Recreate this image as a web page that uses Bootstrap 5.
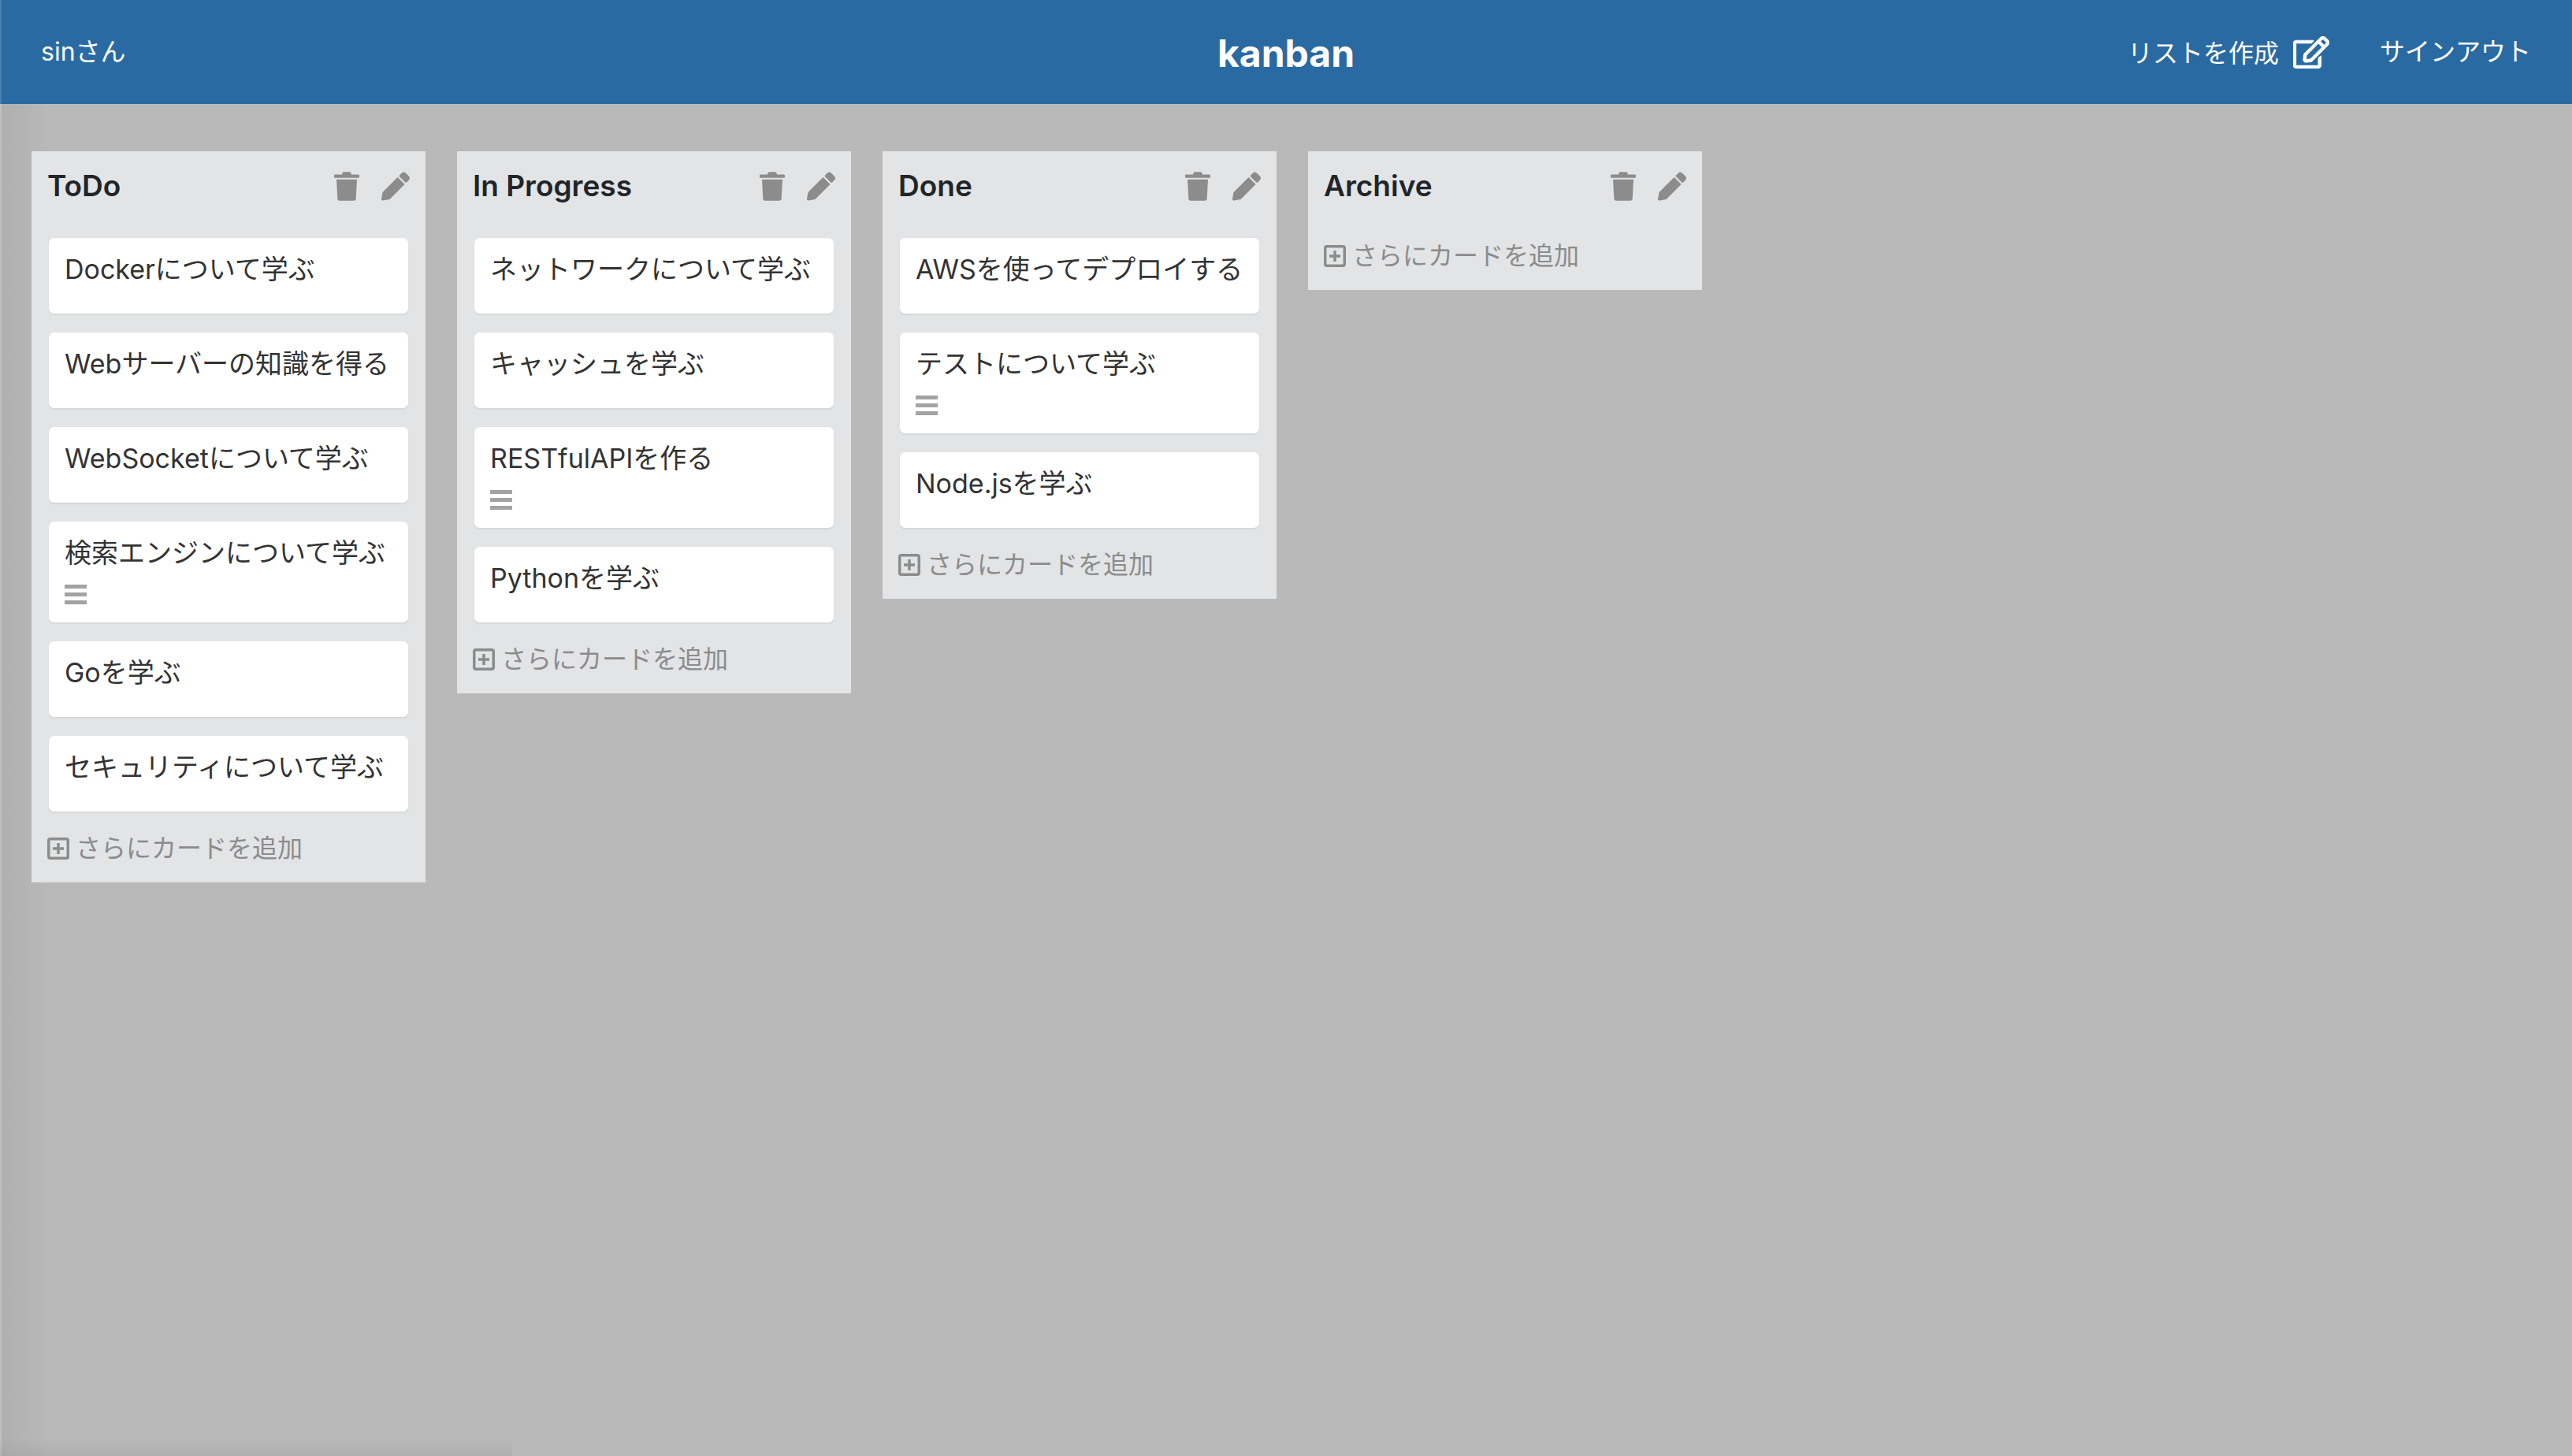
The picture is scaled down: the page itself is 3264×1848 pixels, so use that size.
<!DOCTYPE html>
<html lang="ja">
<head>
    <meta charset="UTF-8">
    <meta name="viewport" content="width=device-width, initial-scale=1.0">
    <title>kanban</title>
    <link href="https://cdn.jsdelivr.net/npm/bootstrap@5.3.0/dist/css/bootstrap.min.css" rel="stylesheet">
    <style>
        body {
            font-family: Inter, "Noto Sans CJK JP", sans-serif;
            background-color: #b9b9b9;
            background-image:
                linear-gradient(to top, rgba(0, 0, 0, 0.05), transparent 24px),
                linear-gradient(to right, rgba(255, 255, 255, 0.1) 2px, rgba(0, 0, 0, 0.05) 2px, transparent 64px);
            background-size: 650px 100%, 100% 100%;
            background-repeat: no-repeat;
            min-height: 1848px;
            color: #212529;
        }

        .kb-header {
            height: 132px;
            background-color: #2a6aa2;
            box-shadow: inset 2px 0 0 rgba(255, 255, 255, 0.15);
            padding: 0 52px;
            color: #fff;
            font-size: 32px;
        }

        .kb-header-side {
            flex: 1 1 0;
        }

        .kb-logo {
            font-size: 48px;
            font-weight: 700;
            padding-top: 3px;
        }

        .kb-create-label {
            padding-top: 3px;
        }

        .kb-create-icon {
            margin-left: 18px;
            margin-right: 64px;
            fill: #fff;
            stroke: #fff;
            stroke-width: 8;
        }

        .kb-board {
            padding: 60px 40px;
            gap: 40px;
        }

        .kb-list {
            width: 500px;
            background-color: #e2e4e6;
            padding: 20px;
        }

        .kb-list-head {
            margin-bottom: 42px;
        }

        .kb-list-title {
            font-size: 37px;
            font-weight: 600;
            line-height: 48px;
            margin: 0;
        }

        .kb-tools {
            gap: 28px;
        }

        .kb-tool {
            fill: #8c8c8c;
        }

        .kb-task {
            background-color: #fff;
            border-radius: 7px;
            min-height: 96px;
            margin: 0 2px 24px;
            padding: 19px 8px 23px 20px;
            font-size: 34px;
            line-height: 42px;
            box-shadow: 0 2px 2px rgba(0, 0, 0, 0.06);
            color: #333;
        }

        .kb-note {
            margin-top: 19px;
            fill: #a3a3a3;
        }

        .kb-add {
            font-size: 32px;
            color: #8c8c8c;
            height: 46px;
        }

        .kb-add-icon {
            fill: none;
            stroke: #8c8c8c;
            stroke-width: 3.5;
        }
    </style>
</head>
<body>
    <svg class="d-none">
        <symbol id="ic-trash" viewBox="0 0 448 512"><path d="M140 46l10-30q5-16 20-16h108q15 0 20 16l10 30h124q16 0 16 16v28q0 16-16 16H16q-16 0-16-16V62q0-16 16-16zM42 134h364l-18 340q-2 38-40 38H100q-38 0-40-38z"/></symbol>
        <symbol id="ic-pencil" viewBox="0 0 512 512"><path d="M497.9 142.1l-46.1 46.1c-4.7 4.7-12.3 4.7-17 0l-111-111c-4.7-4.7-4.7-12.3 0-17l46.1-46.1c18.7-18.7 49.1-18.7 67.9 0l60.1 60.1c18.8 18.7 18.8 49.1 0 67.9zM284.2 99.8L21.6 362.4.4 483.9c-2.9 16.4 11.4 30.6 27.8 27.8l121.5-21.3 262.6-262.6c4.7-4.7 4.7-12.3 0-17l-111-111c-4.8-4.7-12.4-4.7-17.1 0z"/></symbol>
    </svg>

    <header class="kb-header d-flex align-items-center">
        <div class="kb-header-side">sinさん</div>
        <div class="kb-logo">kanban</div>
        <div class="kb-header-side d-flex justify-content-end align-items-center">
            <span class="kb-create-label">リストを作成</span>
            <svg class="kb-create-icon" width="46" height="41" viewBox="0 0 576 512"><path d="M402.3 344.9l32-32c5-5 13.7-1.5 13.7 5.7V464c0 26.5-21.5 48-48 48H48c-26.5 0-48-21.5-48-48V112c0-26.5 21.5-48 48-48h273.5c7.1 0 10.7 8.6 5.7 13.7l-32 32c-1.5 1.5-3.5 2.3-5.7 2.3H48v352h352V350.5c0-2.1.8-4.1 2.3-5.6zm156.6-201.8L296.3 405.7l-90.4 10c-26.2 2.9-48.5-19.2-45.6-45.6l10-90.4L432.9 17.1c22.9-22.9 59.9-22.9 82.7 0l43.2 43.2c22.9 22.9 22.9 60 .1 82.8zM460.1 174L402 115.9 216.2 301.8l-7.3 65.3 65.3-7.3L460.1 174zm64.8-79.7l-43.2-43.2c-4.1-4.1-10.8-4.1-14.8 0L436 82l58.1 58.1 30.9-30.9c4-4.2 4-10.8-.1-14.9z"/></svg>
            <span>サインアウト</span>
        </div>
    </header>

    <main class="kb-board d-flex align-items-start" id="board"></main>

    <script src="https://cdn.jsdelivr.net/npm/bootstrap@5.3.0/dist/js/bootstrap.bundle.min.js"></script>
    <script>
        const lists = [
            ['ToDo', [['Dockerについて学ぶ'], ['Webサーバーの知識を得る'], ['WebSocketについて学ぶ'], ['検索エンジンについて学ぶ', true], ['Goを学ぶ'], ['セキュリティについて学ぶ']]],
            ['In Progress', [['ネットワークについて学ぶ'], ['キャッシュを学ぶ'], ['RESTfulAPIを作る', true], ['Pythonを学ぶ']]],
            ['Done', [['AWSを使ってデプロイする'], ['テストについて学ぶ', true], ['Node.jsを学ぶ']]],
            ['Archive', []]
        ];

        const bars = '<svg class="kb-note d-block" width="28" height="25"><rect width="28" height="5" y="0"/><rect width="28" height="5" y="10"/><rect width="28" height="5" y="20"/></svg>';

        document.getElementById('board').innerHTML = lists.map(([title, tasks]) => `
            <section class="kb-list">
                <div class="kb-list-head d-flex align-items-center justify-content-between">
                    <h2 class="kb-list-title">${title}</h2>
                    <div class="kb-tools d-flex">
                        <svg class="kb-tool" width="32" height="37"><use href="#ic-trash"/></svg>
                        <svg class="kb-tool" width="36" height="37"><use href="#ic-pencil"/></svg>
                    </div>
                </div>
                ${tasks.map(([text, note]) => `
                    <div class="kb-task">${text}${note ? bars : ''}</div>
                `).join('')}
                <div class="kb-add d-flex align-items-center gap-2">
                    <svg class="kb-add-icon" width="28" height="28" viewBox="0 0 28 28"><rect x="1.75" y="1.75" width="24.5" height="24.5" rx="2"/><path d="M14 7v14M7 14h14"/></svg>
                    <span>さらにカードを追加</span>
                </div>
            </section>
        `).join('');
    </script>
</body>
</html>
